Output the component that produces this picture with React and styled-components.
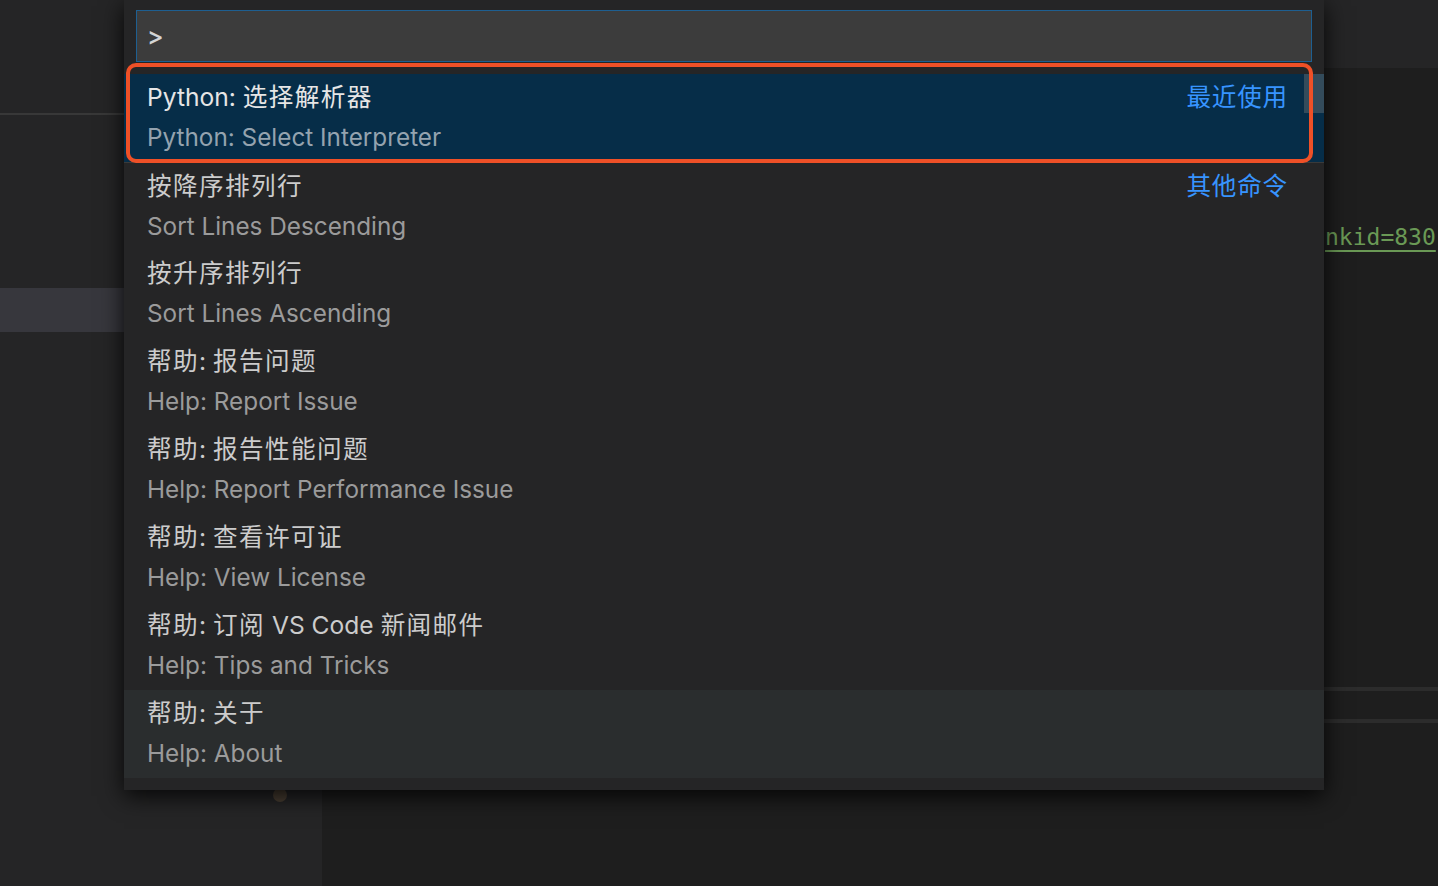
import React from "react";
import styled, { createGlobalStyle } from "styled-components";

const Global = createGlobalStyle`
  html, body { margin: 0; padding: 0; background: #1e1e1e; }
  body { width: 1438px; height: 886px; overflow: hidden; font-family: Inter, "Noto Sans CJK SC", sans-serif; }
`;

const Workbench = styled.div`
  position: relative;
  width: 1438px;
  height: 886px;
  display: grid;
  grid-template-columns: 322px 1fr;
  overflow: hidden;
`;

const Sidebar = styled.div`
  background: #252526;
  display: flex;
  flex-direction: column;
`;

const SideHeader = styled.div`
  height: 115px;
  border-bottom: 2px solid #383838;
  box-sizing: border-box;
`;

const SideRow = styled.div`
  height: 44px;
  margin-top: ${(p) => p.$offset || 0}px;
  background: ${(p) => (p.$active ? "#37373d" : "transparent")};
`;

const Dot = styled.div`
  width: 14px;
  height: 14px;
  border-radius: 50%;
  background: #4a3f33;
  margin: auto 0 84px 273px;
`;

const Editor = styled.div`
  background: #1e1e1e;
  display: flex;
  flex-direction: column;
`;

const TabBar = styled.div`
  height: 68px;
  background: #252526;
`;

const CodeArea = styled.div`
  flex: 1;
  display: flex;
  flex-direction: column;
  align-items: flex-start;
`;

const CodeLine = styled.div`
  margin: 153px 0 0 1003px;
  font-family: "DejaVu Sans Mono", "Liberation Mono", monospace;
  font-size: 23px;
  color: #6a9955;
  text-decoration: underline;
  text-underline-offset: 5px;
  white-space: nowrap;
  line-height: 32px;
`;

const PanelRule = styled.div`
  align-self: stretch;
  height: 4px;
  background: #2c2c2c;
  margin-top: ${(p) => p.$gap}px;
`;

const Widget = styled.div`
  position: absolute;
  left: 124px;
  top: 0;
  width: 1200px;
  background: #252526;
  box-shadow: 0 6px 22px rgba(0, 0, 0, 0.85);
  padding: 10px 0 12px;
  box-sizing: border-box;
`;

const Input = styled.div`
  margin: 0 12px;
  height: 52px;
  box-sizing: border-box;
  background: #3c3c3c;
  border: 1px solid #1e5f91;
  padding: 0 10px;
  display: flex;
  align-items: center;
  color: #d4d4d4;
  font-size: 25px;
  font-weight: 500;
`;

const List = styled.div`
  position: relative;
  margin-top: 12px;
`;

const Row = styled.div`
  height: 88px;
  box-sizing: border-box;
  padding: 3px 37px 5px 23px;
  display: grid;
  grid-template-columns: 1fr auto;
  grid-template-rows: 40px 40px;
  background: ${(p) => (p.$selected ? "#062d48" : p.$hover ? "#2a2d2e" : "transparent")};
  border-top: ${(p) => (p.$separator ? "1px solid #3a3a3a" : "none")};
`;

const Label = styled.div`
  font-size: 24.6px;
  line-height: 40px;
  color: ${(p) => (p.$selected ? "#e6e6e6" : "#cccccc")};
  white-space: nowrap;
`;

const Desc = styled.div`
  grid-column: 1 / 2;
  font-size: 24.3px;
  line-height: 40px;
  color: ${(p) => (p.$selected ? "#94a3af" : "#9b9b9b")};
  white-space: nowrap;
`;

const Cjk = styled.span`
  letter-spacing: 1.4px;
`;

const Group = styled.div`
  font-size: 24.6px;
  line-height: 40px;
  color: #3794ff;
  white-space: nowrap;
  letter-spacing: 0.8px;
  margin-right: -1px;
`;

const Slider = styled.div`
  position: absolute;
  right: 0;
  top: 0;
  width: 20px;
  height: 39px;
  background: rgba(121, 121, 121, 0.4);
`;

const Annotation = styled.div`
  position: absolute;
  left: 2px;
  top: 63px;
  width: 1187px;
  height: 100px;
  box-sizing: border-box;
  border: 4px solid #ee5027;
  border-radius: 10px;
  pointer-events: none;
`;

const items = [
  { label: ["Python: ", "选择解析器"], desc: "Python: Select Interpreter", group: "最近使用", selected: true },
  { label: ["", "按降序排列行"], desc: "Sort Lines Descending", group: "其他命令", separator: true },
  { label: ["", "按升序排列行"], desc: "Sort Lines Ascending" },
  { label: ["", "帮助", ": ", "报告问题"], desc: "Help: Report Issue" },
  { label: ["", "帮助", ": ", "报告性能问题"], desc: "Help: Report Performance Issue" },
  { label: ["", "帮助", ": ", "查看许可证"], desc: "Help: View License" },
  { label: ["", "帮助", ": ", "订阅", " VS Code ", "新闻邮件"], desc: "Help: Tips and Tricks" },
  { label: ["", "帮助", ": ", "关于"], desc: "Help: About", hover: true },
];

function renderLabel(parts) {
  return parts.map((p, i) => (i % 2 === 1 ? <Cjk key={i}>{p}</Cjk> : <React.Fragment key={i}>{p}</React.Fragment>));
}

export default function App() {
  return (
    <>
      <Global />
      <Workbench>
        <Sidebar>
          <SideHeader />
          <SideRow $offset={173} $active />
          <Dot />
        </Sidebar>
        <Editor>
          <TabBar />
          <CodeArea>
            <CodeLine>nkid=830</CodeLine>
            <PanelRule $gap={434} />
            <PanelRule $gap={28} />
          </CodeArea>
        </Editor>
        <Widget>
          <Input>&gt;</Input>
          <List>
            {items.map((it) => (
              <Row key={it.desc} $selected={it.selected} $hover={it.hover} $separator={it.separator}>
                <Label $selected={it.selected}>{renderLabel(it.label)}</Label>
                {it.group ? <Group>{it.group}</Group> : <span />}
                <Desc $selected={it.selected}>{it.desc}</Desc>
              </Row>
            ))}
            <Slider />
          </List>
          <Annotation />
        </Widget>
      </Workbench>
    </>
  );
}
